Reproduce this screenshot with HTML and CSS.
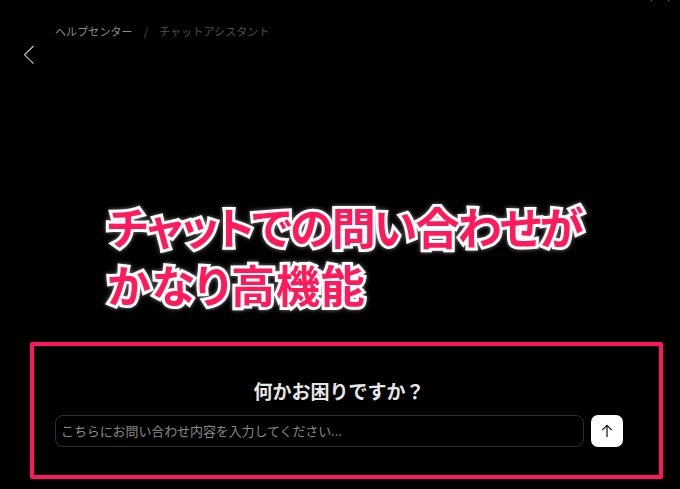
FILE: index.html
```html
<!DOCTYPE html>
<html lang="ja">
<head>
<meta charset="utf-8">
<title>チャットアシスタント</title>
<link rel="stylesheet" href="styles.css">
</head>
<body>
<div class="page">
  <svg class="close" width="20" height="2" viewBox="0 0 20 2" aria-hidden="true"><path d="M1 1.2 L2.4 -0.2 M17.6 -0.2 L19 1.2" fill="none" stroke="#8a8a8a" stroke-width="1"/></svg>
  <header class="top">
    <button class="back" aria-label="戻る">
      <svg width="12" height="20" viewBox="0 0 12 20"><path d="M10.5 1 L1.5 9.8 L10.5 18.6" fill="none" stroke="#c8c8c8" stroke-width="1.1"/></svg>
    </button>
    <nav class="crumbs">
      <span class="crumb-a">ヘルプセンター</span>
      <span class="crumb-sep">/</span>
      <span class="crumb-b">チャットアシスタント</span>
    </nav>
  </header>
  <h1 class="callout"><span class="line-one">チャットでの問い合わせが</span><span class="line-two">かなり高機能</span></h1>
  <section class="panel">
    <div class="chat">
      <h2 class="ask">何かお困りですか？</h2>
      <div class="form">
        <div class="field">こちらにお問い合わせ内容を入力してください...</div>
        <button class="send" aria-label="送信">
          <svg width="14" height="14" viewBox="0 0 14 14"><path d="M7 13 V1.6 M2.2 6.2 L7 1.4 L11.8 6.2" fill="none" stroke="#111" stroke-width="1.2"/></svg>
        </button>
      </div>
    </div>
  </section>
</div>
</body>
</html>
```
FILE: styles.css
```css
* { box-sizing: border-box; }
html, body { margin: 0; padding: 0; background: #000; }
body { font-family: "Noto Sans CJK JP", "Noto Sans", sans-serif; }
.page {
  position: relative;
  width: 680px;
  height: 489px;
  overflow: hidden;
  display: flex;
  flex-direction: column;
  background: #000;
}
.close {
  position: absolute;
  left: 650px;
  top: 0;
}
.top {
  display: flex;
  align-items: flex-start;
  height: 342px;
  padding: 22px 0 0 23px;
  gap: 20px;
}
.back {
  margin-top: 23px;
  padding: 0;
  width: 12px;
  height: 20px;
  border: 0;
  background: none;
  display: block;
}
.crumbs {
  display: flex;
  align-items: center;
  font-size: 11px;
  line-height: 18px;
  letter-spacing: 0.1px;
}
.crumb-a { color: #8d8d8d; }
.crumb-sep { color: #555; margin: 0 11px; }
.crumb-b { color: #4f4f4f; }
.callout {
  position: absolute;
  left: 107px;
  top: 197px;
  margin: 0;
  font-size: 44px;
  line-height: 58px;
  font-weight: 700;
  font-feature-settings: "palt";
  white-space: nowrap;
  color: #ff1a5c;
  -webkit-text-stroke: 6px #fff;
  paint-order: stroke fill;
  filter: drop-shadow(0 0 2px rgba(255,255,255,.5));
}
.line-one { display: block; letter-spacing: -1.8px; }
.line-two { display: block; letter-spacing: 0.9px; }
.panel {
  margin-left: 30px;
  width: 633px;
  height: 137px;
  border: 4px solid #ff1660;
  border-radius: 2px;
  padding: 31px 0 0 21px;
}
.chat {
  width: 568px;
  display: flex;
  flex-direction: column;
  align-items: center;
}
.ask {
  margin: 0 0 10px;
  font-size: 19px;
  line-height: 28px;
  font-weight: 700;
  color: #e6e6e6;
}
.form {
  display: flex;
  align-items: center;
  gap: 7px;
}
.field {
  width: 529px;
  height: 32px;
  border: 1px solid #2e2e2e;
  border-radius: 8px;
  padding: 0 5px;
  font-size: 13px;
  line-height: 30px;
  letter-spacing: -0.1px;
  color: #888;
}
.send {
  width: 32px;
  height: 32px;
  padding: 0;
  border: 0;
  border-radius: 7px;
  background: #fff;
  display: flex;
  align-items: center;
  justify-content: center;
}
```
